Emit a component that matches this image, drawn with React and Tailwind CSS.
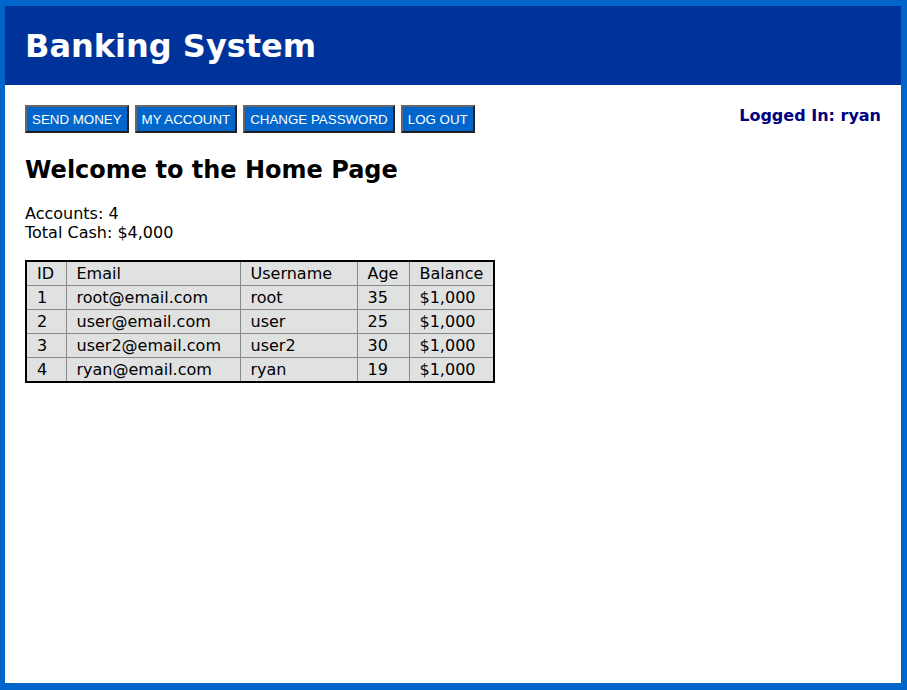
const accounts = [
  { id: 1, email: 'root@email.com', username: 'root', age: 35, balance: '$1,000' },
  { id: 2, email: 'user@email.com', username: 'user', age: 25, balance: '$1,000' },
  { id: 3, email: 'user2@email.com', username: 'user2', age: 30, balance: '$1,000' },
  { id: 4, email: 'ryan@email.com', username: 'ryan', age: 19, balance: '$1,000' },
];

const navBtn =
  'h-[28px] px-[5px] pt-[1px] bg-[#0066cc] text-white text-[13.333px] uppercase leading-none border-2 border-t-[#666] border-l-[#666] border-b-[#222] border-r-[#222] font-["Liberation_Sans",Arial,sans-serif]';

const cell = 'border border-[#888] px-[10px] py-0 leading-[23px] text-left font-normal';

export default function App() {
  return (
    <div className="h-[690px] w-[907px] bg-white border-[#0066cc] border-l-[5px] border-t-[6px] border-r-[6px] border-b-[7px] text-black font-['DejaVu_Sans',Verdana,sans-serif]">
      {/* Header */}
      <div className="h-[79px] bg-[#003399] flex items-center px-[20px]">
        <h1 className="text-white text-[32px] font-bold leading-none">Banking System</h1>
      </div>

      <div className="px-[20px] pt-[20px]">
        {/* Nav */}
        <div className="flex items-start justify-between">
          <div className="flex gap-[6px]">
            <button className={navBtn}>Send Money</button>
            <button className={navBtn}>My Account</button>
            <button className={navBtn}>Change Password</button>
            <button className={navBtn}>Log Out</button>
          </div>
          <div className="-mt-[1px] text-[16px] font-bold text-[#000080]">Logged In: ryan</div>
        </div>

        <h2 className="mt-[22px] text-[24px] font-bold leading-[30px]">Welcome to the Home Page</h2>

        <div className="mt-[19px] text-[16px] leading-[19px]">
          <div>Accounts: 4</div>
          <div>Total Cash: $4,000</div>
        </div>

        {/* Accounts table */}
        <table className="mt-[18px] border-collapse border-2 border-black bg-[#e0e2e2] text-[16px] leading-[23px]">
          <thead>
            <tr>
              <th className={`${cell} w-[40px]`}>ID</th>
              <th className={`${cell} w-[174px]`}>Email</th>
              <th className={`${cell} w-[117px]`}>Username</th>
              <th className={`${cell} w-[52px]`}>Age</th>
              <th className={`${cell} w-[84px]`}>Balance</th>
            </tr>
          </thead>
          <tbody>
            {accounts.map((a) => (
              <tr key={a.id}>
                <td className={cell}>{a.id}</td>
                <td className={cell}>{a.email}</td>
                <td className={cell}>{a.username}</td>
                <td className={cell}>{a.age}</td>
                <td className={cell}>{a.balance}</td>
              </tr>
            ))}
          </tbody>
        </table>
      </div>
    </div>
  );
}
